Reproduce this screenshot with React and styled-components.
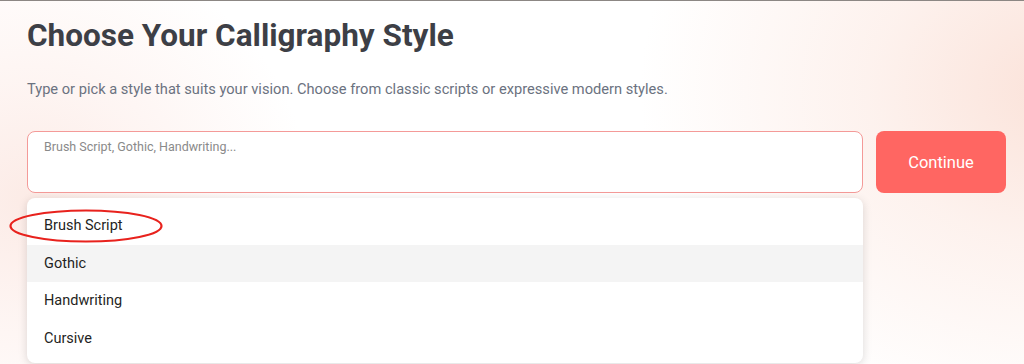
import React from "react";
import styled, { createGlobalStyle } from "styled-components";

const GlobalStyle = createGlobalStyle`
  html, body {
    margin: 0;
    padding: 0;
    height: 100%;
  }
  body {
    font-family: Roboto, "Liberation Sans", sans-serif;
    overflow: hidden;
    background-color: #fff;
    background-image:
      radial-gradient(ellipse 280px 260px at 30px 200px, #fcebe6 0%, rgba(253, 238, 234, 0.6) 45%, rgba(255, 255, 255, 0) 100%),
      radial-gradient(ellipse 420px 340px at 1060px 90px, #fbe2d9 0%, rgba(252, 233, 226, 0.6) 45%, rgba(255, 255, 255, 0) 100%);
  }
`;

const Page = styled.div`
  border-top: 1px solid #8c8784;
  padding: 16px 18px 0 27px;
  box-sizing: border-box;
  height: 364px;
`;

const Title = styled.h1`
  margin: 0;
  font-size: 31.5px;
  line-height: 38px;
  font-weight: 700;
  color: #3d3f46;
`;

const Subtitle = styled.p`
  margin: 22.5px 0 0;
  font-size: 14.65px;
  line-height: 22px;
  color: #6b7280;
`;

const FormRow = styled.div`
  display: flex;
  gap: 13px;
  margin-top: 31.7px;
  align-items: flex-start;
`;

const InputColumn = styled.div`
  flex: 1;
  display: flex;
  flex-direction: column;
  gap: 5px;
`;

const StyleInput = styled.textarea`
  box-sizing: border-box;
  width: 100%;
  height: 62px;
  resize: none;
  border: 1px solid #f49a98;
  border-radius: 8px;
  background: #fff;
  padding: 7px 16px;
  font-family: Roboto, "Liberation Sans", sans-serif;
  font-size: 12.5px;
  line-height: 16px;
  color: #222;
  outline: none;

  &::placeholder {
    color: #8a8a8a;
  }
`;

const Dropdown = styled.ul`
  position: relative;
  list-style: none;
  margin: 0;
  padding: 9px 0 6px;
  background: #fff;
  border-radius: 8px;
  box-shadow: 0 2px 10px rgba(0, 0, 0, 0.14);
`;

const Option = styled.li`
  height: 37.5px;
  line-height: 37.5px;
  padding: 0 17px;
  font-size: 14.5px;
  color: #1f1f23;
  background: ${(p) => (p.$active ? "#f4f4f4" : "transparent")};
`;

const Marker = styled.svg`
  position: absolute;
  left: -19px;
  top: 11px;
  pointer-events: none;
`;

const ContinueButton = styled.button`
  width: 130px;
  height: 62px;
  flex: none;
  border: none;
  border-radius: 8px;
  background: #ff6662;
  color: #fff;
  font-family: Roboto, "Liberation Sans", sans-serif;
  font-size: 16.5px;
  cursor: pointer;
`;

const options = ["Brush Script", "Gothic", "Handwriting", "Cursive"];

const App = () => {
  return (
    <>
      <GlobalStyle />
      <Page>
        <Title>Choose Your Calligraphy Style</Title>
        <Subtitle>
          Type or pick a style that suits your vision. Choose from classic scripts or expressive modern styles.
        </Subtitle>
        <FormRow>
          <InputColumn>
            <StyleInput placeholder="Brush Script, Gothic, Handwriting..." />
            <Dropdown>
              {options.map((o) => (
                <Option key={o} $active={o === "Gothic"}>
                  {o}
                </Option>
              ))}
              <Marker width="156" height="36" viewBox="0 0 156 36">
                <ellipse cx="78" cy="17" rx="75.5" ry="15.5" fill="none" stroke="#e8221d" strokeWidth="2.2" />
              </Marker>
            </Dropdown>
          </InputColumn>
          <ContinueButton>Continue</ContinueButton>
        </FormRow>
      </Page>
    </>
  );
};

export default App;
